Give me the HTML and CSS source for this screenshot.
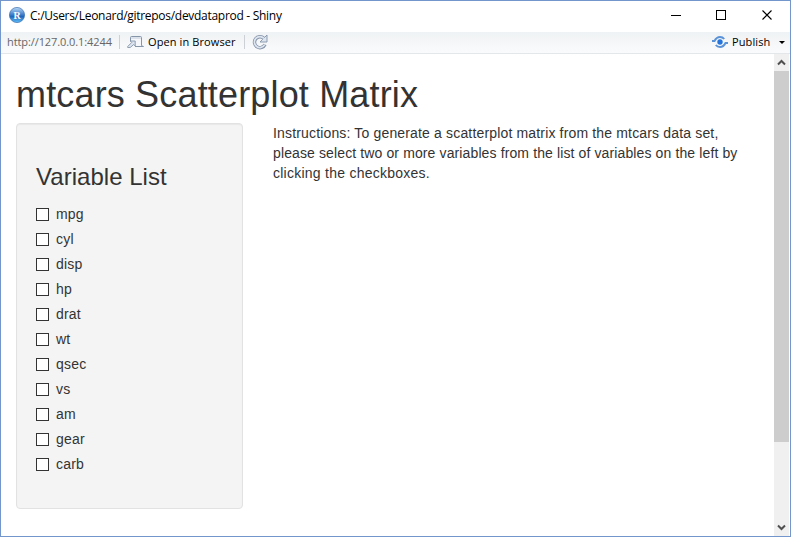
FILE: index.html
```html
<!DOCTYPE html>
<html lang="en">
<head>
<meta charset="utf-8">
<title>mtcars Scatterplot Matrix</title>
<link rel="stylesheet" href="styles.css">
</head>
<body>
<div class="window">
  <header class="titlebar">
    <svg class="app-icon" width="16" height="16" viewBox="0 0 16 16">
      <defs><linearGradient id="ball" x1="0" y1="0" x2="0" y2="1"><stop offset="0" stop-color="#b9d8f7"/><stop offset=".45" stop-color="#4583cc"/><stop offset=".6" stop-color="#2167bb"/><stop offset="1" stop-color="#5fc0fb"/></linearGradient></defs>
      <circle cx="8" cy="8" r="7.600" fill="url(#ball)" stroke="#3b6eae" stroke-width=".7"/>
      <text class="app-letter" x="8" y="11.500" text-anchor="middle">R</text>
    </svg>
    <span class="caption">C:/Users/Leonard/gitrepos/devdataprod - Shiny</span>
    <svg class="controls" width="104" height="12" viewBox="0 0 104 12" fill="none" stroke="#000" shape-rendering="crispEdges">
      <path d="M0 6.500h10M45.500 1.500h9v9h-9z"/>
      <path d="M91.500 1.500l9 9M100.500 1.500l-9 9" shape-rendering="auto" stroke-width="1.100"/>
    </svg>
  </header>
  <nav class="toolbar">
    <span class="url">http://127.0.0.1:4244</span>
    <i class="sep"></i>
    <svg class="open-icon" width="18" height="14" viewBox="0 0 18 14" fill="none" stroke="#8795a8">
      <path d="M3.500 6V2.500q0-1 1-1h9q1 0 1 1V10q0 1.500 2 1.500H8" fill="#f5f7fa"/>
      <path d="M4 3h10" stroke="#c3ccd8"/>
      <path d="M.7 11.500l4-4-1.500-1.500h5v5L6.700 9.500l-3.500 3H.7z" fill="#dce5f0" stroke-width=".9"/>
    </svg>
    <span class="open">Open in Browser</span>
    <i class="sep"></i>
    <svg class="reload" width="16" height="16" viewBox="0 0 16 16">
      <path d="M11.800 4.200A5.500 5.500 0 1 0 13 10.500" fill="none" stroke="#8492a8" stroke-width="3.400"/>
      <path d="M15 1v7H8l2.600-2.600z" fill="#dde5f0" stroke="#8492a8" stroke-width=".9"/>
      <path d="M12 4.400A5.500 5.500 0 1 0 12.700 10.700" fill="none" stroke="#dde5f0" stroke-width="1.700"/>
    </svg>
    <svg class="publish-icon" width="16" height="12" viewBox="0 0 16 12" fill="none" stroke="#5a92d8" stroke-width="2">
      <path d="M0 5h2.500C4 2 6 1 8 1c2 0 3.200.7 4.200 2M16 7h-2.500C12 10 10 11 8 11c-2 0-3.200-.7-4.200-2"/>
      <circle cx="8" cy="6" r="2.700" fill="#2474dc" stroke="none"/>
    </svg>
    <span class="publish">Publish</span>
    <i class="caret"></i>
  </nav>
  <div class="viewport">
    <main class="page">
      <h1>mtcars Scatterplot Matrix</h1>
      <div class="row">
        <form class="well">
          <h3>Variable List</h3>
          <label><input type="checkbox"><span>mpg</span></label>
          <label><input type="checkbox"><span>cyl</span></label>
          <label><input type="checkbox"><span>disp</span></label>
          <label><input type="checkbox"><span>hp</span></label>
          <label><input type="checkbox"><span>drat</span></label>
          <label><input type="checkbox"><span>wt</span></label>
          <label><input type="checkbox"><span>qsec</span></label>
          <label><input type="checkbox"><span>vs</span></label>
          <label><input type="checkbox"><span>am</span></label>
          <label><input type="checkbox"><span>gear</span></label>
          <label><input type="checkbox"><span>carb</span></label>
        </form>
        <p class="instructions"><span class="l1">Instructions: To generate a scatterplot matrix from the mtcars data set,</span><br><span class="l2">please select two or more variables from the list of variables on the left by</span><br><span class="l3">clicking the checkboxes.</span></p>
      </div>
    </main>
    <aside class="scrollbar">
      <svg width="15" height="17" viewBox="0 0 15 17"><path d="M4 10.500L7.500 7l3.500 3.500" fill="none" stroke="#505050" stroke-width="2"/></svg>
      <div class="thumb"></div>
      <svg class="down" width="15" height="17" viewBox="0 0 15 17"><path d="M4 6.500L7.500 10 11 6.500" fill="none" stroke="#505050" stroke-width="2"/></svg>
    </aside>
  </div>
</div>
</body>
</html>
```
FILE: styles.css
```css
* { box-sizing: border-box; }
body { margin: 0; background: #fff; color: #333; font: 14px/20px "Liberation Sans", Arial, sans-serif; }
.window { width: 791px; height: 537px; border: 1px solid #7397cc; display: flex; flex-direction: column; overflow: hidden; }
.titlebar { height: 31px; flex: none; display: flex; align-items: center; padding: 0 15px 3px 8px; }
.app-icon { flex: none; margin-right: 5px; }
.app-letter { font: bold 10px "Liberation Serif", serif; fill: #fff; }
.caption { font: 12px/16px "Open Sans", sans-serif; color: #000; letter-spacing: -0.29px; white-space: nowrap; padding-top: 2px; }
.controls { margin-left: auto; }
.toolbar { height: 22px; flex: none; display: flex; align-items: center; padding: 0 5px 1px 6px; background: linear-gradient(to bottom, #eff2f4, #fafbfc); border-bottom: 1px solid #e4e7ea; font: 11px/16px "Open Sans", sans-serif; color: #000; white-space: nowrap; }
.url { color: #666; width: 112px; letter-spacing: -.09px; }
.sep { width: 1px; height: 14px; background: #cdd1d5; }
.open-icon { margin-left: 7px; flex: none; }
.open { margin-left: 3px; width: 96px; letter-spacing: .1px; }
.reload { margin-left: 7px; flex: none; }
.publish-icon { margin-left: auto; flex: none; }
.publish { margin-left: 4px; width: 47px; letter-spacing: .1px; }
.caret { border: 3px solid transparent; border-top-color: #000; border-bottom: 0; }
.viewport { flex: 1; min-height: 0; display: flex; }
.page { flex: 1; padding: 0 15px; }
h1 { margin: 21px 0 9px; font-size: 36px; line-height: 39px; font-weight: 400; white-space: nowrap; letter-spacing: .16px; }
.row { display: flex; gap: 30px; }
.well { width: 227px; height: 386px; flex: none; padding: 19px; background: #f4f4f4; border: 1px solid #e2e2e2; border-radius: 4px; box-shadow: inset 0 1px 1px rgba(0,0,0,.05); }
h3 { margin: 21px 0 14px; font-size: 24px; line-height: 26px; font-weight: 400; letter-spacing: .03px; }
.well label { display: flex; align-items: center; height: 20px; margin-bottom: 5px; letter-spacing: .2px; }
input { appearance: none; width: 13px; height: 13px; margin: 0 7px 0 0; border: 1px solid #333; background: #fff; }
.instructions { margin: 0; white-space: nowrap; }
.l1 { letter-spacing: .16px; }
.l2 { letter-spacing: .12px; }
.l3 { letter-spacing: .25px; }
.scrollbar { width: 15px; margin-right: 1px; background: #f0f0f0; display: flex; flex-direction: column; }
.scrollbar svg { display: block; flex: none; }
.thumb { height: 371px; background: #cdcdcd; }
.down { margin-top: auto; }
```
